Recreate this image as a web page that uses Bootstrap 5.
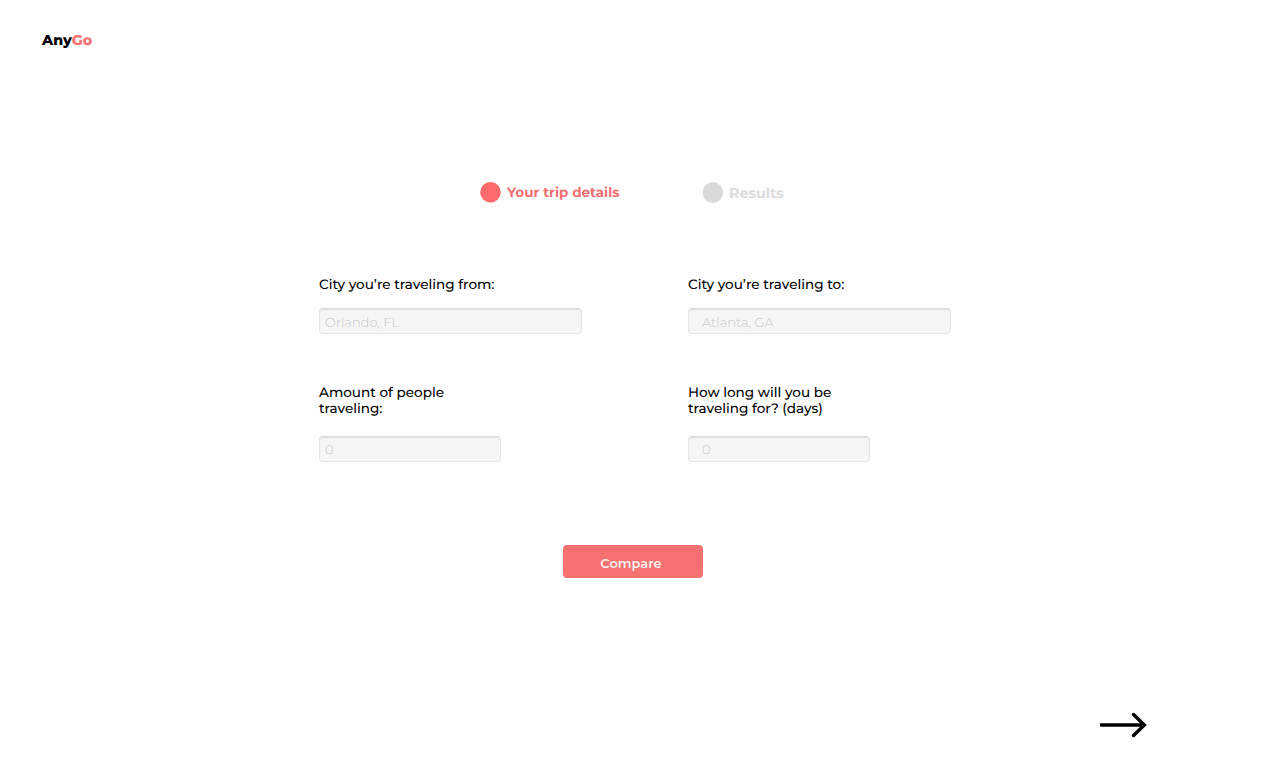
<!DOCTYPE html>
<html lang="en">
<head>
    <meta charset="UTF-8">
    <meta name="viewport" content="width=device-width, initial-scale=1.0">
    <title>AnyGo - Your trip details</title>
    <link href="https://cdn.jsdelivr.net/npm/bootstrap@5.3.3/dist/css/bootstrap.min.css" rel="stylesheet">
    <style>
        body {
            font-family: Montserrat, Inter, "Open Sans", sans-serif;
            font-size: 13.55px;
            line-height: 16px;
            color: #000;
            background: #fefefe;
            text-rendering: geometricPrecision;
        }
        .site-header { padding: 32px 42px 0; height: 181px; }
        .brand { font-size: 14.2px; font-weight: 800; color: #000; }
        .coral { color: #f87171; }
        .steps { height: 22px; padding-left: 480px; }
        .step { font-weight: 700; gap: 5px; height: 22px; }
        .step-first { width: 222px; color: #f37073; }
        .step-first .step-text { padding-top: 2px; }
        .step-next { color: #dcdcdc; font-size: 14.2px; }
        .step-next .step-text { padding-top: 2px; }
        .dot { width: 22px; height: 22px; }
        .trip-form { width: 632px; margin-left: 319px; margin-top: 73px; }
        .trip-grid { display: grid; grid-template-columns: 263px 263px; column-gap: 106px; row-gap: 50px; }
        .trip-grid .form-label { padding-top: 1px; margin-bottom: 15px; font-weight: 500; }
        .trip-grid .tall { margin-bottom: 19px; }
        .trip-grid .form-control {
            height: 26px;
            padding: 2px 5px 0;
            font-size: 13px;
            line-height: 16px;
            font-weight: 300;
            background: #f6f6f6;
            border: 1px solid #e6e6e6;
            border-top-color: #dadada;
            border-radius: 4px;
            box-shadow: inset 0 1px 1px #dedede;
        }
        .trip-grid .form-control::placeholder { color: #c6c6c6; opacity: 1; }
        .trip-grid .indent { padding-left: 13px; }
        .trip-grid .short { width: 182px; padding-top: 0; }
        .btn-compare {
            width: 140px;
            height: 33px;
            margin: 83px 0 0 244px;
            padding: 3px 4px 0 0;
            font-size: 13px;
            line-height: 16px;
            font-weight: 600;
            color: #fff0ef;
            background: #f87171;
            border: 0;
            border-radius: 4px;
        }
        .btn-compare:hover { color: #fff; background: #ef5f5f; }
        .next-bar { margin-top: 133px; padding-right: 122px; }
    </style>
</head>
<body>
    <header class="site-header">
        <a class="brand text-decoration-none" href="#">Any<span class="coral">Go</span></a>
    </header>

    <main>
        <div class="steps d-flex">
            <div class="step step-first d-flex align-items-center">
                <svg class="dot" viewBox="0 0 22 22"><circle cx="10.5" cy="11.2" r="10.3" fill="#ff6b6d"/></svg>
                <span class="step-text">Your trip details</span>
            </div>
            <div class="step step-next d-flex align-items-center">
                <svg class="dot" viewBox="0 0 22 22"><circle cx="10.8" cy="11.6" r="10.3" fill="#dadada"/></svg>
                <span class="step-text">Results</span>
            </div>
        </div>

        <form class="trip-form">
            <div class="trip-grid">
                <div>
                    <label for="cityFrom" class="form-label d-block">City you’re traveling from:</label>
                    <input type="text" class="form-control" id="cityFrom" placeholder="Orlando, FL">
                </div>
                <div>
                    <label for="cityTo" class="form-label d-block">City you’re traveling to:</label>
                    <input type="text" class="form-control indent" id="cityTo" placeholder="Atlanta, GA">
                </div>
                <div>
                    <label for="people" class="form-label tall d-block">Amount of people<br>traveling:</label>
                    <input type="text" class="form-control short" id="people" placeholder="0">
                </div>
                <div>
                    <label for="days" class="form-label tall d-block">How long will you be<br>traveling for? (days)</label>
                    <input type="text" class="form-control indent short" id="days" placeholder="0">
                </div>
            </div>
            <button type="button" class="btn btn-compare d-block">Compare</button>
        </form>

        <div class="next-bar d-flex justify-content-end">
            <a href="#" aria-label="Next">
                <svg class="d-block" width="48" height="28" viewBox="0 0 48 28" fill="none" stroke="#000" stroke-width="3.4">
                    <path d="M0 14H44"/>
                    <path d="M33.5 3.5L44.3 14L33.5 24.5" stroke-linecap="round"/>
                </svg>
            </a>
        </div>
    </main>

    <script src="https://cdn.jsdelivr.net/npm/bootstrap@5.3.3/dist/js/bootstrap.bundle.min.js"></script>
</body>
</html>
